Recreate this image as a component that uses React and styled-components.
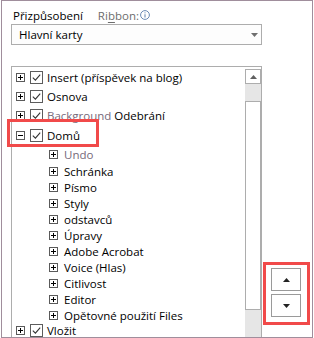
import React from "react";
import styled, { createGlobalStyle } from "styled-components";

const GlobalStyle = createGlobalStyle`
  html, body {
    margin: 0;
    padding: 0;
    background: #fff;
    overflow: hidden;
  }
  body {
    font-family: "Open Sans", "Liberation Sans", sans-serif;
    font-size: 11.5px;
    color: #000;
  }
`;

const Window = styled.div`
  box-sizing: border-box;
  width: 312px;
  height: 338px;
  margin-left: 1px;
  border: 1px solid #a08e9c;
  padding: 6px 0 0 9px;
  overflow: hidden;
`;

const LabelRow = styled.div`
  display: flex;
  align-items: center;
  height: 16px;
  padding-left: 2px;
`;

const Muted = styled.span`
  color: #6d6d6d;
  margin-left: ${(p) => p.gap || 0}px;
  u {
    text-decoration: underline;
    text-underline-offset: 2px;
  }
`;

const Info = styled.svg`
  margin-left: 1px;
`;

const Select = styled.div`
  box-sizing: border-box;
  margin-top: 1px;
  width: 251px;
  height: 21px;
  border: 1px solid #adadad;
  background: #fdfdfd;
  display: flex;
  align-items: center;
  justify-content: space-between;
  padding: 0 3px 0 7px;
`;

const Body = styled.div`
  display: flex;
  margin-top: 21px;
`;

const List = styled.div`
  box-sizing: border-box;
  width: 251px;
  height: 290px;
  border: 1px solid #adadad;
  display: flex;
`;

const Items = styled.div`
  flex: 1;
  display: flex;
  flex-direction: column;
`;

const Row = styled.div`
  position: relative;
  display: flex;
  align-items: center;
  height: ${(p) => p.h}px;
  padding-left: ${(p) => (p.child ? 37 : 4)}px;
  flex-shrink: 0;
`;

const Label = styled.span`
  margin-left: ${(p) => (p.child ? 6 : 4)}px;
  color: ${(p) => (p.muted ? "#76697a" : "#000")};
  white-space: nowrap;
`;

const Plain = styled.span`
  color: #000;
`;

const Marker = styled.span`
  position: absolute;
  left: -5px;
  top: -6px;
  width: 92px;
  height: 28px;
  box-sizing: border-box;
  border: 3px solid #f14a4a;
  pointer-events: none;
`;

const Check = styled.svg`
  margin-left: 5px;
  flex-shrink: 0;
`;

const Scrollbar = styled.div`
  width: 16px;
  margin-top: 2px;
  display: flex;
  flex-direction: column;
  background: #e6e6e6;
`;

const ScrollButton = styled.div`
  box-sizing: border-box;
  height: 15px;
  border: 1px solid #adadad;
  background: #fff;
  display: flex;
  align-items: center;
  justify-content: center;
`;

const Thumb = styled.div`
  box-sizing: border-box;
  margin-top: 17px;
  height: 209px;
  border: 1px solid #adadad;
  background: #fff;
`;

const Side = styled.div`
  width: 50px;
  display: flex;
  flex-direction: column;
`;

const MoveBox = styled.div`
  box-sizing: border-box;
  margin: 196px 0 0 1px;
  width: 47px;
  height: 63px;
  border: 3px solid #f14a4a;
  padding: 3px 0 0 5px;
  display: flex;
  flex-direction: column;
  gap: 3px;
`;

const MoveButton = styled.div`
  box-sizing: border-box;
  width: 30px;
  height: 23px;
  border: 1px solid #9a9a9a;
  background: #fff;
  display: flex;
  align-items: center;
  justify-content: center;
`;

const Triangle = ({ down, color = "#222" }) => (
  <svg width="7" height="4" viewBox="0 0 7 4">
    <path d={down ? "M0 0h7L3.5 4z" : "M0 4h7L3.5 0z"} fill={color} />
  </svg>
);

const Expander = ({ open }) => (
  <svg width="9" height="9" viewBox="0 0 9 9" style={{ flexShrink: 0 }}>
    <rect x="0.5" y="0.5" width="8" height="8" fill="#fff" stroke="#5a5a5a" />
    <path d="M2 4.5h5" stroke="#000" />
    {!open && <path d="M4.5 2v5" stroke="#000" />}
  </svg>
);

const CheckBox = () => (
  <Check width="13" height="13" viewBox="0 0 13 13">
    <rect x="0.5" y="0.5" width="12" height="12" fill="#fff" stroke="#5c5c5c" />
    <path d="M2.8 6.6l2.6 2.6 4.8-5.6" fill="none" stroke="#333" strokeWidth="1.1" />
  </Check>
);

const children = [
  { label: "Undo", muted: true, h: 18 },
  { label: "Schránka" },
  { label: "Písmo" },
  { label: "Styly" },
  { label: "odstavců" },
  { label: "Úpravy" },
  { label: "Adobe Acrobat" },
  { label: "Voice (Hlas)" },
  { label: "Citlivost" },
  { label: "Editor" },
  { label: "Opětovné použití Files" },
];

const tabs = [
  { label: "Insert (příspěvek na blog)", h: 20 },
  { label: "Osnova", h: 19 },
  { label: "Background", extra: " Odebrání", muted: true, h: 19 },
  { label: "Domů", h: 20, open: true, marked: true },
  { label: "Vložit", h: 15 },
];

export default function App() {
  return (
    <>
      <GlobalStyle />
      <Window>
        <LabelRow>
          Přizpůsobení
          <Muted gap={15}>
            Ri<u>b</u>bon:
          </Muted>
          <Info width="10" height="10" viewBox="0 0 10 10">
            <circle cx="5" cy="5" r="4.4" fill="none" stroke="#6a89b4" />
            <path d="M5 4.2v3.3" stroke="#6a89b4" strokeWidth="1.1" />
            <circle cx="5" cy="2.8" r="0.6" fill="#6a89b4" />
          </Info>
        </LabelRow>
        <Select>
          Hlavní karty
          <Triangle down color="#6f6f6f" />
        </Select>
        <Body>
          <List>
            <Items>
              {tabs.map((tab) => (
                <React.Fragment key={tab.label}>
                  <Row h={tab.h}>
                    {tab.marked && <Marker />}
                    <Expander open={tab.open} />
                    <CheckBox />
                    <Label muted={tab.muted}>
                      {tab.label}
                      {tab.extra && <Plain>{tab.extra}</Plain>}
                    </Label>
                  </Row>
                  {tab.open &&
                    children.map((c) => (
                      <Row key={c.label} h={c.h || 16} child>
                        <Expander />
                        <Label child muted={c.muted}>
                          {c.label}
                        </Label>
                      </Row>
                    ))}
                </React.Fragment>
              ))}
            </Items>
            <Scrollbar>
              <ScrollButton>
                <Triangle color="#606060" />
              </ScrollButton>
              <Thumb />
            </Scrollbar>
          </List>
          <Side>
            <MoveBox>
              <MoveButton>
                <Triangle />
              </MoveButton>
              <MoveButton>
                <Triangle down />
              </MoveButton>
            </MoveBox>
          </Side>
        </Body>
      </Window>
    </>
  );
}
